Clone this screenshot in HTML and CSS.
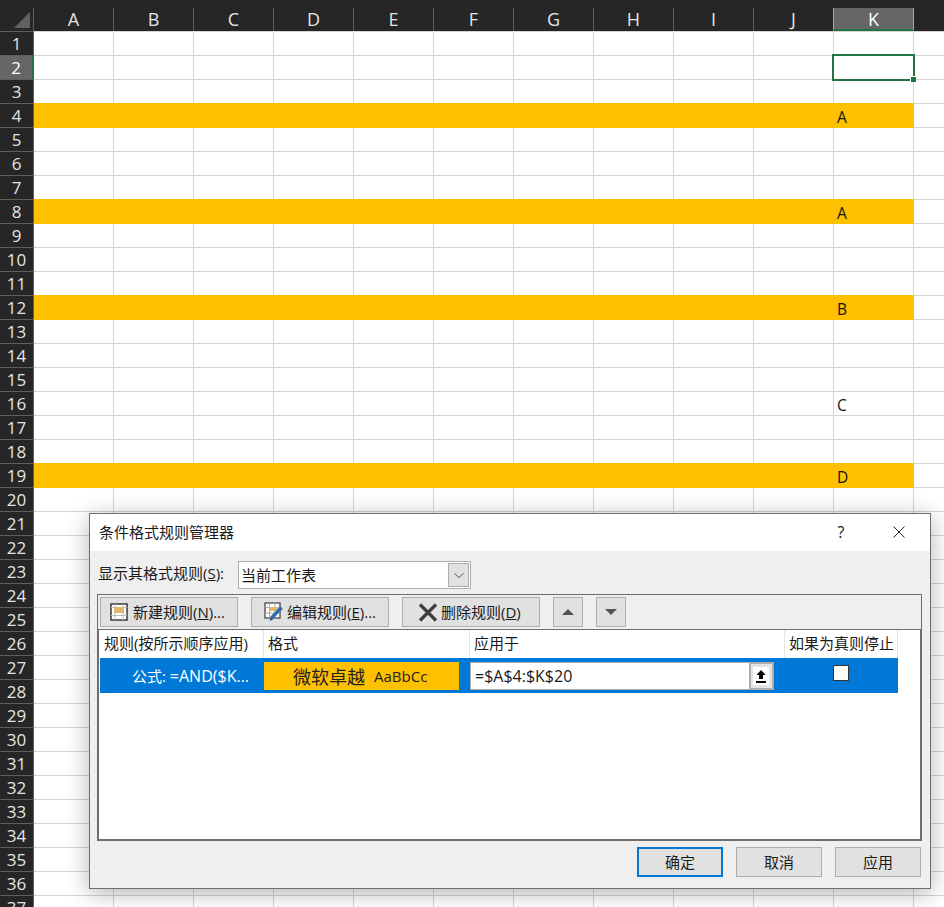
FILE: index.html
```html
<!DOCTYPE html>
<html>
	<head>
		<meta charset="utf-8">
		<title>条件格式规则管理器</title>
		<link rel="stylesheet" href="styles.css">
	</head>
	<body>
		<!-- 工作表 -->
		<div class="sheet">
			<div class="col-heads">
				<div class="corner"><div class="corner-mark"></div></div>
				<div class="col-head">A</div>
				<div class="col-head">B</div>
				<div class="col-head">C</div>
				<div class="col-head">D</div>
				<div class="col-head">E</div>
				<div class="col-head">F</div>
				<div class="col-head">G</div>
				<div class="col-head">H</div>
				<div class="col-head">I</div>
				<div class="col-head">J</div>
				<div class="col-head col-on">K</div>
			</div>
			<div class="row"><div class="row-head">1</div><div class="cells"></div></div>
			<div class="row"><div class="row-head row-on">2</div><div class="cells"></div></div>
			<div class="row"><div class="row-head">3</div><div class="cells"></div></div>
			<div class="row"><div class="row-head">4</div><div class="cells hl"><span class="val">A</span></div></div>
			<div class="row"><div class="row-head">5</div><div class="cells"></div></div>
			<div class="row"><div class="row-head">6</div><div class="cells"></div></div>
			<div class="row"><div class="row-head">7</div><div class="cells"></div></div>
			<div class="row"><div class="row-head">8</div><div class="cells hl"><span class="val">A</span></div></div>
			<div class="row"><div class="row-head">9</div><div class="cells"></div></div>
			<div class="row"><div class="row-head">10</div><div class="cells"></div></div>
			<div class="row"><div class="row-head">11</div><div class="cells"></div></div>
			<div class="row"><div class="row-head">12</div><div class="cells hl"><span class="val">B</span></div></div>
			<div class="row"><div class="row-head">13</div><div class="cells"></div></div>
			<div class="row"><div class="row-head">14</div><div class="cells"></div></div>
			<div class="row"><div class="row-head">15</div><div class="cells"></div></div>
			<div class="row"><div class="row-head">16</div><div class="cells"><span class="val">C</span></div></div>
			<div class="row"><div class="row-head">17</div><div class="cells"></div></div>
			<div class="row"><div class="row-head">18</div><div class="cells"></div></div>
			<div class="row"><div class="row-head">19</div><div class="cells hl"><span class="val">D</span></div></div>
			<div class="row"><div class="row-head">20</div><div class="cells"></div></div>
			<div class="row"><div class="row-head">21</div><div class="cells"></div></div>
			<div class="row"><div class="row-head">22</div><div class="cells"></div></div>
			<div class="row"><div class="row-head">23</div><div class="cells"></div></div>
			<div class="row"><div class="row-head">24</div><div class="cells"></div></div>
			<div class="row"><div class="row-head">25</div><div class="cells"></div></div>
			<div class="row"><div class="row-head">26</div><div class="cells"></div></div>
			<div class="row"><div class="row-head">27</div><div class="cells"></div></div>
			<div class="row"><div class="row-head">28</div><div class="cells"></div></div>
			<div class="row"><div class="row-head">29</div><div class="cells"></div></div>
			<div class="row"><div class="row-head">30</div><div class="cells"></div></div>
			<div class="row"><div class="row-head">31</div><div class="cells"></div></div>
			<div class="row"><div class="row-head">32</div><div class="cells"></div></div>
			<div class="row"><div class="row-head">33</div><div class="cells"></div></div>
			<div class="row"><div class="row-head">34</div><div class="cells"></div></div>
			<div class="row"><div class="row-head">35</div><div class="cells"></div></div>
			<div class="row"><div class="row-head">36</div><div class="cells"></div></div>
			<div class="row"><div class="row-head">37</div><div class="cells"></div></div>

			<!-- 选中的单元格 -->
			<div class="cell-cursor"><div class="cell-handle"></div></div>
		</div>

		<!-- 对话框 -->
		<div class="dialog">
			<div class="dialog-title">
				<span class="title-text">条件格式规则管理器</span>
				<span class="title-help">?</span>
				<svg class="title-close" width="12" height="12" viewBox="0 0 12 12">
					<path d="M0.5 0.5L11.5 11.5M11.5 0.5L0.5 11.5" stroke="#222" stroke-width="1" fill="none"/>
				</svg>
			</div>
			<div class="dialog-body">
				<div class="filter">
					<span class="filter-label">显示其格式规则(<u>S</u>):</span>
					<div class="select">
						<span class="select-text">当前工作表</span>
						<div class="select-btn">
							<svg width="10" height="5" viewBox="0 0 10 5">
								<path d="M0.5 0.5L5 4.5L9.5 0.5" stroke="#555" stroke-width="1" fill="none"/>
							</svg>
						</div>
					</div>
				</div>

				<div class="panel">
					<div class="toolbar">
						<div class="btn btn-tool btn-new">
							<svg width="18" height="18" viewBox="0 0 18 18">
								<rect x="1" y="1" width="16" height="16" fill="#fff" stroke="#444" stroke-width="1.6"/>
								<path d="M1 4.5H17M1 12.5H17M5 1V17M13 1V17" stroke="#bbb" stroke-width="1"/>
								<rect x="4" y="4" width="10" height="6" fill="#e2b66e"/>
							</svg>
							<span>新建规则(<u>N</u>)...</span>
						</div>
						<div class="btn btn-tool btn-edit">
							<svg width="20" height="20" viewBox="0 0 20 20">
								<rect x="1" y="1" width="15" height="15" fill="#fff" stroke="#555" stroke-width="1.4"/>
								<path d="M1 5.5H16M1 11H16M5.5 1V16M11 1V16" stroke="#aaa" stroke-width="1"/>
								<rect x="5" y="5" width="9" height="4" fill="#e2b66e"/>
								<path d="M17.5 5.5L7.5 16" stroke="#2b6cb0" stroke-width="3.4" fill="none"/>
								<path d="M7 15L5.5 19L9 17.5Z" fill="#1d4e80"/>
							</svg>
							<span>编辑规则(<u>E</u>)...</span>
						</div>
						<div class="btn btn-tool btn-del">
							<svg width="20" height="19" viewBox="0 0 20 19">
								<path d="M2 1.5L18 17.5M18 1.5L2 17.5" stroke="#3f3f3f" stroke-width="3.2" fill="none"/>
							</svg>
							<span>删除规则(<u>D</u>)</span>
						</div>
						<div class="btn btn-arrow">
							<svg width="12" height="6" viewBox="0 0 12 6"><path d="M6 0L12 6H0Z" fill="#555"/></svg>
						</div>
						<div class="btn btn-arrow">
							<svg width="12" height="6" viewBox="0 0 12 6"><path d="M0 0H12L6 6Z" fill="#555"/></svg>
						</div>
					</div>

					<div class="list">
						<div class="list-head">
							<div class="head-cell">规则(按所示顺序应用)</div>
							<div class="head-cell">格式</div>
							<div class="head-cell">应用于</div>
							<div class="head-cell">如果为真则停止</div>
						</div>
						<div class="rule">
							<div class="rule-name">公式: <span class="latin">=AND($K...</span></div>
							<div class="rule-preview"><span class="preview-cn">微软卓越</span><span>AaBbCc</span></div>
							<div class="rule-range">
								<span class="range-text latin">=$A$4:$K$20</span>
								<div class="range-btn">
									<svg class="range-icon" width="16" height="18" viewBox="0 0 16 18">
										<path d="M8 3L12.5 8H10V12H6V8H3.5Z" fill="#000"/>
										<rect x="3" y="14" width="10" height="2" fill="#000"/>
									</svg>
								</div>
							</div>
							<div class="rule-stop"><div class="check"></div></div>
						</div>
					</div>
				</div>

				<div class="footer">
					<div class="btn btn-foot btn-ok">确定</div>
					<div class="btn btn-foot">取消</div>
					<div class="btn btn-foot">应用</div>
				</div>
			</div>
		</div>
	</body>
</html>
```

FILE: styles.css
```css
*{
	margin: 0;
	padding: 0;
	box-sizing: border-box;
}

html, body{
	height: 100%;
	overflow: hidden;
}

body{
	background-color: #fff;
	font-family: "Open Sans", "Noto Sans CJK SC", sans-serif;
	position: relative;
}

/* 工作表 */
.sheet{
	position: relative;
	height: 907px;
	overflow: hidden;
}

.col-heads{
	display: flex;
	height: 31px;
	padding-top: 8px;
	background-color: #262626;
}

.corner{
	width: 34px;
	border-right: 1px solid #5e5e5e;
	padding: 4px 3px 0 14px;
}

.corner-mark{
	width: 16px;
	height: 16px;
	background-color: #616161;
	clip-path: polygon(100% 0, 100% 100%, 0 100%);
}

.col-head{
	width: 80px;
	border-right: 1px solid #5e5e5e;
	color: #e4e4e4;
	font-size: 18px;
	line-height: 23px;
	text-align: center;
}

.col-on{
	background-color: #666;
	border-left: 1px solid #a8a8a8;
	border-right: 1px solid #a8a8a8;
	border-bottom: 2px solid #217346;
	margin-left: -1px;
	width: 81px;
	color: #fff;
}

.row{
	display: flex;
	height: 24px;
}

.row-head{
	width: 34px;
	background-color: #262626;
	border-top: 1px solid #5e5e5e;
	border-right: 1px solid #5e5e5e;
	color: #e4e4e4;
	font-size: 17px;
	line-height: 23px;
	text-align: center;
}

.row-on{
	background-color: #666;
	border-right: 2px solid #217346;
	color: #fff;
}

/* 网格线画在背景上 */
.cells{
	flex: 1;
	display: grid;
	grid-template-columns: repeat(10, 80px) 80px;
	background:
		linear-gradient(#d4d4d4, #d4d4d4) 0 0 / 100% 1px no-repeat,
		repeating-linear-gradient(to right, transparent 0, transparent 79px, #d4d4d4 79px, #d4d4d4 80px);
}

.hl{
	height: 25px;
	position: relative;
	z-index: 1;
	background:
		linear-gradient(#ffc000, #ffc000) 0 0 / 880px 100% no-repeat,
		linear-gradient(#d4d4d4, #d4d4d4) 0 0 / 100% 1px no-repeat,
		repeating-linear-gradient(to right, transparent 0, transparent 79px, #d4d4d4 79px, #d4d4d4 80px);
}

.val{
	grid-column: 11;
	padding-left: 3px;
	font-size: 15.5px;
	line-height: 29px;
	color: #111;
}

.cell-cursor{
	position: absolute;
	left: 832px;
	top: 54px;
	width: 83px;
	height: 27px;
	border: 2px solid #217346;
	z-index: 2;
}

.cell-handle{
	position: absolute;
	right: -3px;
	bottom: -3px;
	width: 6px;
	height: 6px;
	background-color: #217346;
	border-left: 1px solid #fff;
	border-top: 1px solid #fff;
}

/* 对话框 */
.dialog{
	position: absolute;
	left: 89px;
	top: 513px;
	width: 842px;
	height: 376px;
	z-index: 3;
	display: flex;
	flex-direction: column;
	background-color: #efefef;
	border: 1px solid #6e6e6e;
	box-shadow: 0 4px 22px rgba(0, 0, 0, 0.3);
	font-size: 15px;
	color: #1a1a1a;
}

.dialog-title{
	display: flex;
	align-items: center;
	height: 37px;
	padding: 0 25px 2px 9px;
	background-color: #fff;
}

.title-text{
	flex: 1;
}

.title-help{
	width: 16px;
	margin-right: 44px;
	font-size: 16px;
	text-align: center;
}

.dialog-body{
	flex: 1;
	padding: 10px 8px 0 7px;
}

.filter{
	display: flex;
	align-items: center;
	gap: 14px;
	height: 28px;
	margin-left: 1px;
}

.filter-label{
	margin-bottom: 6px;
}

.select{
	display: flex;
	align-items: center;
	justify-content: space-between;
	width: 233px;
	height: 28px;
	padding: 0 1px 0 2px;
	background-color: #fff;
	border: 1px solid #adadad;
}

.select-text{
	margin-bottom: 2px;
}

.select-btn{
	display: flex;
	align-items: center;
	justify-content: center;
	width: 21px;
	height: 24px;
	background-color: #e1e1e1;
	border: 1px solid #adadad;
}

.panel{
	height: 247px;
	margin-top: 5px;
	border: 1px solid #6e6e6e;
	display: flex;
	flex-direction: column;
}

.toolbar{
	display: flex;
	gap: 13px;
	height: 34px;
	padding: 2px 0 0 2px;
}

.btn{
	display: flex;
	align-items: center;
	justify-content: center;
	height: 30px;
	background-color: #e1e1e1;
	border: 1px solid #adadad;
}

.btn-tool{
	width: 138px;
	justify-content: flex-start;
}

.btn-tool span{
	margin-bottom: 2px;
}

.btn-new{
	padding-left: 9px;
	gap: 5px;
}

.btn-edit{
	padding-left: 12px;
	gap: 3px;
}

.btn-del{
	padding-left: 15px;
	gap: 3px;
}

.btn-arrow{
	width: 30px;
}

.list{
	flex: 1;
	background-color: #fff;
	border: 1px solid #6e6e6e;
}

.list-head, .rule{
	display: grid;
	grid-template-columns: 164px 206px 315px 113px;
	width: 798px;
	margin-left: 1px;
}

.list-head{
	height: 28px;
}

.head-cell{
	padding-left: 4px;
	border-right: 1px solid #e5e5e5;
	line-height: 26px;
	white-space: nowrap;
}

.rule{
	height: 35px;
	padding-top: 4px;
	background-color: #0078d7;
}

.latin{
	font-size: 16px;
}

.rule-name{
	padding-left: 32px;
	color: #fff;
	line-height: 29px;
	white-space: nowrap;
}

.rule-preview{
	display: flex;
	align-items: center;
	width: 195px;
	height: 28px;
	padding-left: 29px;
	gap: 9px;
	background-color: #ffc000;
	color: #222;
}

.preview-cn{
	font-size: 18px;
}

.rule-range{
	display: flex;
	width: 304px;
	height: 28px;
	background-color: #fff;
	border: 1px solid #adadad;
}

.range-text{
	flex: 1;
	padding-left: 4px;
	line-height: 26px;
}

.range-btn{
	display: flex;
	align-items: center;
	justify-content: center;
	width: 25px;
	height: 28px;
	margin: -1px -1px 0 0;
	padding-right: 2px;
	background-color: #e4e4e4;
	border: 2px solid #adadad;
}

.range-icon{
	background-color: #fff;
}

.rule-stop{
	display: flex;
	justify-content: center;
	padding: 3px 2px 0 0;
}

.check{
	width: 16px;
	height: 16px;
	background-color: #fff;
	border: 1px solid #333;
}

.footer{
	display: flex;
	justify-content: flex-end;
	gap: 13px;
	margin-top: 6px;
	padding-right: 1px;
}

.btn-foot{
	width: 86px;
	padding-bottom: 2px;
}

.btn-ok{
	border: 2px solid #0078d7;
}
```
